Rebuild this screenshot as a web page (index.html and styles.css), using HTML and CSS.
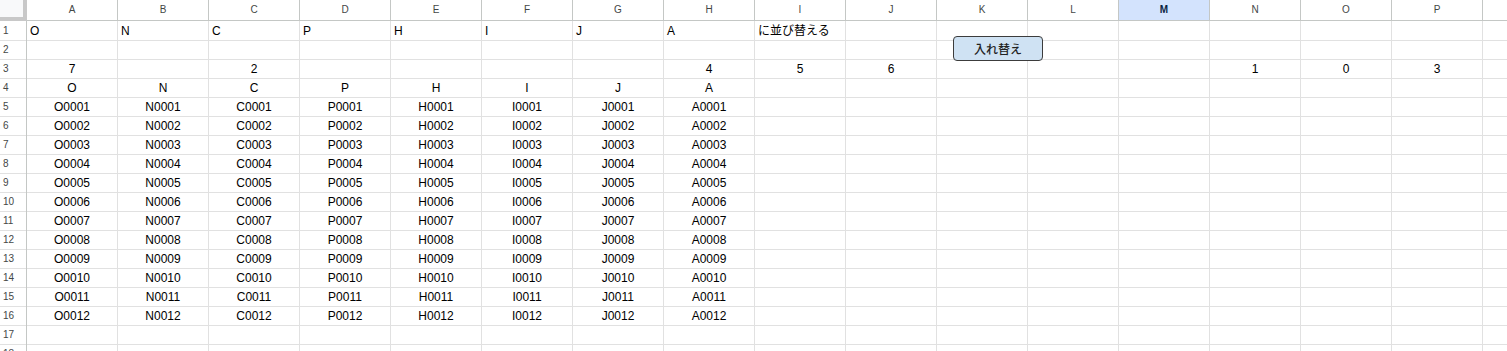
FILE: index.html
```html
<!DOCTYPE html>
<html lang="ja">
<head>
<meta charset="utf-8">
<title>Sheet</title>
<link rel="stylesheet" href="styles.css">
</head>
<body>
<div class="sheet">
  <div class="row head">
    <div class="c corner"></div>
    <div class="c">A</div><div class="c">B</div><div class="c">C</div><div class="c">D</div><div class="c">E</div><div class="c">F</div><div class="c">G</div><div class="c">H</div><div class="c">I</div><div class="c">J</div><div class="c">K</div><div class="c">L</div><div class="c sel">M</div><div class="c">N</div><div class="c">O</div><div class="c">P</div><div class="c">Q</div>
  </div>
  <div class="row">
    <div class="c rh">1</div>
    <div class="c">O</div><div class="c">N</div><div class="c">C</div><div class="c">P</div><div class="c">H</div><div class="c">I</div><div class="c">J</div><div class="c">A</div><div class="c jp">に並び替える</div><div class="c"></div><div class="c"></div><div class="c"></div><div class="c"></div><div class="c"></div><div class="c"></div><div class="c"></div><div class="c"></div>
  </div>
  <div class="row">
    <div class="c rh">2</div>
    <div class="c"></div><div class="c"></div><div class="c"></div><div class="c"></div><div class="c"></div><div class="c"></div><div class="c"></div><div class="c"></div><div class="c"></div><div class="c"></div><div class="c"></div><div class="c"></div><div class="c"></div><div class="c"></div><div class="c"></div><div class="c"></div><div class="c"></div>
  </div>
  <div class="row">
    <div class="c rh">3</div>
    <div class="c ctr">7</div><div class="c"></div><div class="c ctr">2</div><div class="c"></div><div class="c"></div><div class="c"></div><div class="c"></div><div class="c ctr">4</div><div class="c ctr">5</div><div class="c ctr">6</div><div class="c"></div><div class="c"></div><div class="c"></div><div class="c ctr">1</div><div class="c ctr">0</div><div class="c ctr">3</div><div class="c"></div>
  </div>
  <div class="row">
    <div class="c rh">4</div>
    <div class="c ctr">O</div><div class="c ctr">N</div><div class="c ctr">C</div><div class="c ctr">P</div><div class="c ctr">H</div><div class="c ctr">I</div><div class="c ctr">J</div><div class="c ctr">A</div><div class="c"></div><div class="c"></div><div class="c"></div><div class="c"></div><div class="c"></div><div class="c"></div><div class="c"></div><div class="c"></div><div class="c"></div>
  </div>
  <div class="row">
    <div class="c rh">5</div>
    <div class="c ctr">O0001</div><div class="c ctr">N0001</div><div class="c ctr">C0001</div><div class="c ctr">P0001</div><div class="c ctr">H0001</div><div class="c ctr">I0001</div><div class="c ctr">J0001</div><div class="c ctr">A0001</div><div class="c"></div><div class="c"></div><div class="c"></div><div class="c"></div><div class="c"></div><div class="c"></div><div class="c"></div><div class="c"></div><div class="c"></div>
  </div>
  <div class="row">
    <div class="c rh">6</div>
    <div class="c ctr">O0002</div><div class="c ctr">N0002</div><div class="c ctr">C0002</div><div class="c ctr">P0002</div><div class="c ctr">H0002</div><div class="c ctr">I0002</div><div class="c ctr">J0002</div><div class="c ctr">A0002</div><div class="c"></div><div class="c"></div><div class="c"></div><div class="c"></div><div class="c"></div><div class="c"></div><div class="c"></div><div class="c"></div><div class="c"></div>
  </div>
  <div class="row">
    <div class="c rh">7</div>
    <div class="c ctr">O0003</div><div class="c ctr">N0003</div><div class="c ctr">C0003</div><div class="c ctr">P0003</div><div class="c ctr">H0003</div><div class="c ctr">I0003</div><div class="c ctr">J0003</div><div class="c ctr">A0003</div><div class="c"></div><div class="c"></div><div class="c"></div><div class="c"></div><div class="c"></div><div class="c"></div><div class="c"></div><div class="c"></div><div class="c"></div>
  </div>
  <div class="row">
    <div class="c rh">8</div>
    <div class="c ctr">O0004</div><div class="c ctr">N0004</div><div class="c ctr">C0004</div><div class="c ctr">P0004</div><div class="c ctr">H0004</div><div class="c ctr">I0004</div><div class="c ctr">J0004</div><div class="c ctr">A0004</div><div class="c"></div><div class="c"></div><div class="c"></div><div class="c"></div><div class="c"></div><div class="c"></div><div class="c"></div><div class="c"></div><div class="c"></div>
  </div>
  <div class="row">
    <div class="c rh">9</div>
    <div class="c ctr">O0005</div><div class="c ctr">N0005</div><div class="c ctr">C0005</div><div class="c ctr">P0005</div><div class="c ctr">H0005</div><div class="c ctr">I0005</div><div class="c ctr">J0005</div><div class="c ctr">A0005</div><div class="c"></div><div class="c"></div><div class="c"></div><div class="c"></div><div class="c"></div><div class="c"></div><div class="c"></div><div class="c"></div><div class="c"></div>
  </div>
  <div class="row">
    <div class="c rh">10</div>
    <div class="c ctr">O0006</div><div class="c ctr">N0006</div><div class="c ctr">C0006</div><div class="c ctr">P0006</div><div class="c ctr">H0006</div><div class="c ctr">I0006</div><div class="c ctr">J0006</div><div class="c ctr">A0006</div><div class="c"></div><div class="c"></div><div class="c"></div><div class="c"></div><div class="c"></div><div class="c"></div><div class="c"></div><div class="c"></div><div class="c"></div>
  </div>
  <div class="row">
    <div class="c rh">11</div>
    <div class="c ctr">O0007</div><div class="c ctr">N0007</div><div class="c ctr">C0007</div><div class="c ctr">P0007</div><div class="c ctr">H0007</div><div class="c ctr">I0007</div><div class="c ctr">J0007</div><div class="c ctr">A0007</div><div class="c"></div><div class="c"></div><div class="c"></div><div class="c"></div><div class="c"></div><div class="c"></div><div class="c"></div><div class="c"></div><div class="c"></div>
  </div>
  <div class="row">
    <div class="c rh">12</div>
    <div class="c ctr">O0008</div><div class="c ctr">N0008</div><div class="c ctr">C0008</div><div class="c ctr">P0008</div><div class="c ctr">H0008</div><div class="c ctr">I0008</div><div class="c ctr">J0008</div><div class="c ctr">A0008</div><div class="c"></div><div class="c"></div><div class="c"></div><div class="c"></div><div class="c"></div><div class="c"></div><div class="c"></div><div class="c"></div><div class="c"></div>
  </div>
  <div class="row">
    <div class="c rh">13</div>
    <div class="c ctr">O0009</div><div class="c ctr">N0009</div><div class="c ctr">C0009</div><div class="c ctr">P0009</div><div class="c ctr">H0009</div><div class="c ctr">I0009</div><div class="c ctr">J0009</div><div class="c ctr">A0009</div><div class="c"></div><div class="c"></div><div class="c"></div><div class="c"></div><div class="c"></div><div class="c"></div><div class="c"></div><div class="c"></div><div class="c"></div>
  </div>
  <div class="row">
    <div class="c rh">14</div>
    <div class="c ctr">O0010</div><div class="c ctr">N0010</div><div class="c ctr">C0010</div><div class="c ctr">P0010</div><div class="c ctr">H0010</div><div class="c ctr">I0010</div><div class="c ctr">J0010</div><div class="c ctr">A0010</div><div class="c"></div><div class="c"></div><div class="c"></div><div class="c"></div><div class="c"></div><div class="c"></div><div class="c"></div><div class="c"></div><div class="c"></div>
  </div>
  <div class="row">
    <div class="c rh">15</div>
    <div class="c ctr">O0011</div><div class="c ctr">N0011</div><div class="c ctr">C0011</div><div class="c ctr">P0011</div><div class="c ctr">H0011</div><div class="c ctr">I0011</div><div class="c ctr">J0011</div><div class="c ctr">A0011</div><div class="c"></div><div class="c"></div><div class="c"></div><div class="c"></div><div class="c"></div><div class="c"></div><div class="c"></div><div class="c"></div><div class="c"></div>
  </div>
  <div class="row">
    <div class="c rh">16</div>
    <div class="c ctr">O0012</div><div class="c ctr">N0012</div><div class="c ctr">C0012</div><div class="c ctr">P0012</div><div class="c ctr">H0012</div><div class="c ctr">I0012</div><div class="c ctr">J0012</div><div class="c ctr">A0012</div><div class="c"></div><div class="c"></div><div class="c"></div><div class="c"></div><div class="c"></div><div class="c"></div><div class="c"></div><div class="c"></div><div class="c"></div>
  </div>
  <div class="row">
    <div class="c rh">17</div>
    <div class="c"></div><div class="c"></div><div class="c"></div><div class="c"></div><div class="c"></div><div class="c"></div><div class="c"></div><div class="c"></div><div class="c"></div><div class="c"></div><div class="c"></div><div class="c"></div><div class="c"></div><div class="c"></div><div class="c"></div><div class="c"></div><div class="c"></div>
  </div>
  <div class="row">
    <div class="c rh">18</div>
    <div class="c"></div><div class="c"></div><div class="c"></div><div class="c"></div><div class="c"></div><div class="c"></div><div class="c"></div><div class="c"></div><div class="c"></div><div class="c"></div><div class="c"></div><div class="c"></div><div class="c"></div><div class="c"></div><div class="c"></div><div class="c"></div><div class="c"></div>
  </div>
  <button class="btn" type="button">入れ替え</button>
</div>
</body>
</html>
```

FILE: styles.css
```css
html, body {
  margin: 0;
  padding: 0;
  background: #ffffff;
  overflow: hidden;
}

body {
  font-family: "Liberation Sans", Arial, "Noto Sans CJK JP", sans-serif;
  font-size: 12px;
  color: #000000;
}

.sheet {
  position: relative;
  width: 1507px;
  height: 351px;
  overflow: hidden;
}

.row {
  display: grid;
  grid-template-columns: 27px repeat(17, 91px);
  height: 19px;
}

.row.head {
  height: 21px;
}

.c {
  box-sizing: border-box;
  height: 100%;
  border-right: 1px solid #e1e1e1;
  border-bottom: 1px solid #e1e1e1;
  padding: 1px 3px 0 3px;
  line-height: 18px;
  white-space: nowrap;
  overflow: visible;
}

.ctr {
  text-align: center;
}

.jp {
  font-family: "Liberation Sans", "Noto Sans CJK JP", sans-serif;
}

.rh {
  border-right-color: #c4c7c5;
  font-size: 10px;
  color: #444746;
  padding-left: 3px;
}

.head .c {
  border-right-color: #c4c7c5;
  border-bottom-color: #c4c7c5;
  padding: 0;
  text-align: center;
  font-size: 10px;
  line-height: 20px;
  color: #444746;
}

.head .corner {
  background: #f8f9fa;
  border-right: 4px solid #c8c8c8;
  border-bottom: 4px solid #c8c8c8;
}

.head .sel {
  background: #d3e3fd;
  font-weight: bold;
  color: #0b1f44;
}

.btn {
  position: absolute;
  left: 953px;
  top: 36px;
  width: 90px;
  height: 25px;
  box-sizing: border-box;
  margin: 0;
  padding: 0;
  background: #cfe2f3;
  border: 1px solid #3c3c3c;
  border-radius: 4px;
  font-family: "Noto Sans CJK JP", sans-serif;
  font-size: 12px;
  font-weight: 500;
  color: #222222;
  line-height: 22px;
  text-align: center;
}
```
